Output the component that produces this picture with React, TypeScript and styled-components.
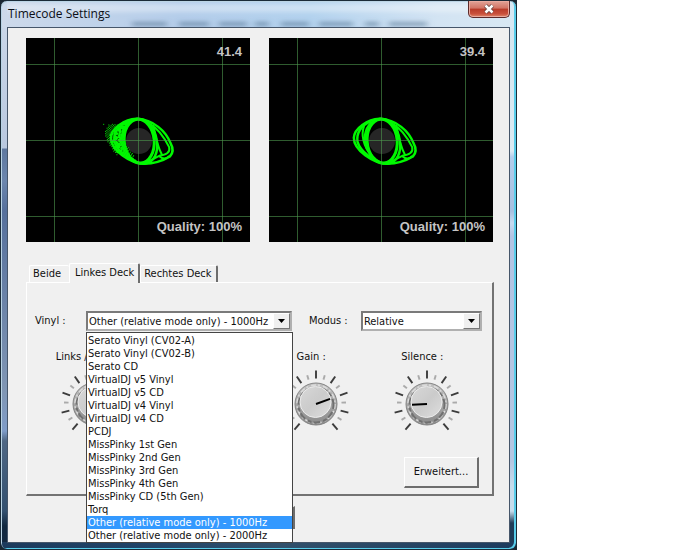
import React, { useId, useState } from "react";
import styled, { createGlobalStyle, css } from "styled-components";

const GlobalStyle = createGlobalStyle`
  * { box-sizing: border-box; }
  body {
    margin: 0;
    background: #fff;
    color: #111;
    font: 11px/14px "DejaVu Sans Condensed", "Noto Sans", sans-serif;
  }
  button, select { font: inherit; color: inherit; }
`;

const Shell = styled.div`
  max-width: 517px;
  background: #1a2630;
`;

const Frame = styled.section`
  padding: 0 6px 6px;
  border: 1px solid #1b2b38;
  border-radius: 7px;
  box-shadow: inset -2px -1px 0 #58cdea, inset 1px 1px 0 #b9d3e4;
  background:
    linear-gradient(90deg, #cdd9ea, #b4cdea 35%, #b3d2ee 60%, #d3e4f3 85%, #d8e8f3) 0 0 / 100% 27px no-repeat,
    linear-gradient(90deg, #1c3a5c, #21456a 30%, #31506b 55%, #1d3b5e) 0 100% / 100% 7px no-repeat,
    linear-gradient(180deg, #cdd9ea, #b9c8df 147px, #5f789f 148px, #6c86ad 180px, #56709c 210px, #8096b4 390px, #7f9cc8 430px, #4f6784 440px, #33506f 510px, #122840 525px) 0 0 / 7px 100% no-repeat,
    linear-gradient(180deg, #d3e4ee, #dceaf3 150px, #b4cdec 156px, #a7bfe0 210px, #c6daf0 222px, #b3c4e4 235px, #b5c6e2 460px, #c6dcec 485px, #c6dcec 510px, #1f3c58 522px) 100% 0 / 7px 100% no-repeat;
`;

const TitleBar = styled.header`
  position: relative;
  display: flex;
  justify-content: space-between;
  align-items: flex-start;
  height: 26px;
`;

const Smudges = styled.svg`
  position: absolute;
  inset: 0;
  width: 100%;
  height: 100%;
`;

const Title = styled.h1`
  position: relative;
  margin: 0;
  padding: 4px 0 0 1px;
  font: 12px/18px "Open Sans", "Noto Sans", sans-serif;
  color: #0b0f16;
`;

const CloseButton = styled.button`
  position: relative;
  display: flex;
  justify-content: center;
  align-items: center;
  width: 42px;
  height: 17px;
  padding: 0;
  border: 1px solid #5c2a2a;
  border-top: 0;
  border-radius: 0 0 5px 5px;
  box-shadow: inset 0 0 0 1px #e9aa9f;
  background: linear-gradient(180deg, #e2a398, #d27465 45%, #b83b29 50%, #c9503c 80%, #e08a6c);
`;

const Client = styled.main`
  padding: 10px 15px 13px 18px;
  border: 1px solid #46566a;
  background: #f0f0f0;
`;

const Scopes = styled.div`
  display: grid;
  grid-template-columns: 1fr 1fr;
  gap: 19px;
  margin-right: 1px;
`;

const ScopeBox = styled.figure`
  position: relative;
  display: flex;
  flex-direction: column;
  justify-content: space-between;
  align-items: flex-end;
  height: 204px;
  margin: 0;
  padding: 6px 8px 7px;
  background: #000;
  color: #c4c4c4;
  font: bold 13px/16px "Liberation Sans", sans-serif;
`;

const ScopeDrawing = styled.svg`
  position: absolute;
  inset: 0;
  width: 100%;
  height: 100%;
`;

const ScopeText = styled.span`
  position: relative;
`;

const TabList = styled.div`
  display: flex;
  align-items: flex-end;
  height: 20px;
  margin-top: 20px;
  padding-left: 3px;
`;

const Tab = styled.button<{ $active?: boolean; $edge?: boolean }>`
  height: 17px;
  padding: 0 4px 0 3px;
  border: 1px solid #fff;
  border-bottom: 0;
  border-right: ${p => (p.$edge ? "2px solid #6d6d6d" : "0")};
  border-radius: 2px 2px 0 0;
  background: #f0f0f0;
  white-space: nowrap;
  line-height: 16px;
  ${p => !p.$edge && css`
    padding-right: 8px;
  `}
  ${p => p.$active && css`
    position: relative;
    height: 20px;
    margin-bottom: -1px;
    padding: 0 4px 2px 5px;
  `}
`;

const Panel = styled.div`
  padding: 28px 0 6px;
  border: 1px solid #fff;
  border-right: 2px solid #737373;
  border-bottom: 2px solid #737373;
`;

const Choices = styled.div`
  display: grid;
  grid-template-columns: 51px minmax(0, 17fr) 69px minmax(0, 10fr);
  align-items: center;
  margin: 0 10px 0 8px;
`;

const FieldLabel = styled.label<{ $inset?: boolean }>`
  padding-left: ${p => (p.$inset ? "17px" : "0")};
  white-space: nowrap;
`;

const Combo = styled.div`
  position: relative;
  display: flex;
  height: 20px;
  border: 2px solid #7a7a7a;
  border-right-color: #b0b0b0;
  border-bottom-color: #b0b0b0;
  background: #fff;
`;

const NativeSelect = styled.select`
  flex: 1;
  min-width: 0;
  padding: 1px 17px 0 1px;
  border: 0;
  outline: 0;
  appearance: none;
  background: transparent;
  text-overflow: ellipsis;
`;

const ArrowBox = styled.span`
  position: absolute;
  right: 0;
  top: 0;
  display: flex;
  justify-content: center;
  align-items: center;
  width: 17px;
  height: 16px;
  border: 1px solid #fff;
  border-right-color: #777;
  border-bottom-color: #777;
  background: #f0f0f0;
  pointer-events: none;
`;

const Options = styled.ul`
  position: absolute;
  z-index: 2;
  top: 19px;
  left: -2px;
  right: -3px;
  margin: 0;
  padding: 1px 0 0;
  border: 1px solid #444;
  background: #fff;
  list-style: none;
`;

const Option = styled.li<{ $selected: boolean }>`
  padding-left: 1px;
  line-height: 13px;
  white-space: nowrap;
  cursor: default;
  background: ${p => (p.$selected ? "#3399ff" : "transparent")};
  color: ${p => (p.$selected ? "#fff" : "inherit")};
`;

const Knobs = styled.div`
  display: grid;
  grid-template-columns: repeat(4, 1fr);
  margin: 19px 9px 0 11px;
`;

const KnobCell = styled.div`
  display: flex;
  flex-direction: column;
  align-items: center;
  gap: 5px;
`;

const KnobLabel = styled.span<{ $wide?: boolean }>`
  min-width: ${p => (p.$wide ? "76px" : "0")};
  min-height: 14px;
  padding-right: 10px;
  white-space: nowrap;
`;

const KnobDial = styled.svg`
  width: 70px;
  height: 70px;
`;

const Actions = styled.div<{ $center?: boolean }>`
  display: flex;
  justify-content: ${p => (p.$center ? "center" : "flex-end")};
  margin: ${p => (p.$center ? "10px 0 0" : "18px 13px 0 0")};
`;

const PushButton = styled.button<{ $small?: boolean }>`
  width: ${p => (p.$small ? "70px" : "75px")};
  height: ${p => (p.$small ? "23px" : "31px")};
  padding: 0;
  border: 1px solid #fff;
  border-right: 2px solid #6d6d6d;
  border-bottom: 2px solid #6d6d6d;
  background: #f0f0f0;
`;

const vinyls = [
  "Serato Vinyl (CV02-A)",
  "Serato Vinyl (CV02-B)",
  "Serato CD",
  "VirtualDJ v5 Vinyl",
  "VirtualDJ v5 CD",
  "VirtualDJ v4 Vinyl",
  "VirtualDJ v4 CD",
  "PCDJ",
  "MissPinky 1st Gen",
  "MissPinky 2nd Gen",
  "MissPinky 3rd Gen",
  "MissPinky 4th Gen",
  "MissPinky CD (5th Gen)",
  "Torq",
  "Other (relative mode only) - 1000Hz",
  "Other (relative mode only) - 2000Hz",
];

// Stray samples scattered around the left edge of a noisy signal.
const noise = Array.from({ length: 150 }, (_, i) => {
  const a = ((i * 37) % 101) / 101;
  const b = ((i * 61) % 97) / 97;
  return { x: -106 + b * 52 + a * a * 44, y: -50 + a * 98 };
});

function Scope({ level, noisy = false }: { level: string; noisy?: boolean }) {
  return (
    <ScopeBox>
      <ScopeDrawing viewBox="0 0 224 204" preserveAspectRatio="xMidYMid slice" aria-hidden="true">
        <circle cx="113" cy="103" r="13" fill="#262626" />
        <g fill="none" stroke="#00f800" strokeWidth="7.5" transform="translate(112.5 102.5) scale(.3333)">
          <ellipse cx="2" cy="2" rx="45" ry="66" transform="rotate(-5 2 2)" strokeWidth="9" />
          <path d="M-6-65C-42-64-82-36-83-8C-83 30-25 68 16 70C50 69 78 58 94 48C104 38 106 26 96 8C82-28 46-62-6-65Z" />
          <path d="M-2-65C-32-62-50-36-50-4C-49 34-12 72 18 70C48 66 60 34 55 2C50-38 24-66-2-65Z" />
          <path d="M-30-58C-62-46-76-22-72 4C-64 32-28 58 2 68" />
          <path d="M-52-44C-62-20-56 16-28 48M34-50C62-34 78-8 92 20C96 36 84 42 62 46L24 66M44-48C50-14 56 16 70 42M60 46C74 58 84 56 92 46" strokeWidth="6" />
          {noisy && (
            <path
              d="M-8-62C-50-56-72-30-66 4C-58 30-34 50-10 60M-20-58C-56-44-62-18-56 16L-24 54M-30-52C-50-24-48 18-26 48M-86-14L-60-38M-80 6L-56-16M-74 26L-54 4M-66 36L-44 18"
              strokeDasharray="13 3 9 2"
            />
          )}
        </g>
        {noisy && (
          <g fill="#00e800" transform="translate(112.5 102.5) scale(.3333)">
            {noise.map((n, i) => <rect key={i} x={n.x} y={n.y} width="3" height="3" />)}
          </g>
        )}
        <g stroke="#4f9a4f" strokeOpacity=".6">
          <path d="M28.5 0V204M112.5 0V204M196.5 0V204M0 26.5H224M0 102.5H224M0 178.5H224" />
        </g>
      </ScopeDrawing>
      <ScopeText>{level}</ScopeText>
      <ScopeText>Quality: 100%</ScopeText>
    </ScopeBox>
  );
}

function Arrow() {
  return (
    <ArrowBox aria-hidden="true">
      <svg width="7" height="4" viewBox="0 0 7 4"><path d="M0 0H7L3.5 4Z" /></svg>
    </ArrowBox>
  );
}

function Knob({ label, angle, wide }: { label: string; angle: number; wide?: boolean }) {
  const id = useId();
  const majors = [-140, -105, -70, -35, 0, 35, 70, 105, 140];
  const minors = [-122, -87, -52, -17, 17, 52, 87, 122];
  return (
    <KnobCell>
      <KnobLabel $wide={wide}>{label}</KnobLabel>
      <KnobDial viewBox="-35 -35 70 70" role="img" aria-label={label}>
        <defs>
          <linearGradient id={id + "rim"} x1="0" y1="0" x2="0" y2="1">
            <stop offset="0" stopColor="#c2c2c2" />
            <stop offset="1" stopColor="#8a8a8a" />
          </linearGradient>
          <linearGradient id={id + "cap"} x1="0" y1="0" x2="1" y2="1">
            <stop offset="0" stopColor="#d8d8d8" />
            <stop offset=".5" stopColor="#cbcbcb" />
            <stop offset="1" stopColor="#dedede" />
          </linearGradient>
        </defs>
        {majors.map(a => <path key={a} d="M0-25.5V-33.5" transform={`rotate(${a})`} stroke="#3c3c3c" strokeWidth="1.9" />)}
        {minors.map(a => <path key={a} d="M0-25.5V-30" transform={`rotate(${a})`} stroke="#aaa" strokeWidth="1.9" />)}
        <circle r="21" fill={`url(#${id}rim)`} stroke="#858585" />
        <circle r="19" fill="none" stroke="#dcdcdc" strokeWidth="1.5" strokeDasharray="5 2 2 3" />
        <circle cy="1" r="17.5" fill="none" stroke="#707070" strokeWidth="2" strokeDasharray="4 3 7 2" />
        <circle cx="-.5" cy="-2" r="15.5" fill={`url(#${id}cap)`} stroke="#ececec" />
        <path d="M0 0V-15" transform={`rotate(${angle})`} stroke="#000" strokeWidth="2" />
      </KnobDial>
    </KnobCell>
  );
}

export default function App() {
  const [vinyl, setVinyl] = useState(vinyls[14]);
  return (
    <Shell>
      <GlobalStyle />
      <Frame>
        <TitleBar>
          <Smudges aria-hidden="true">
            <defs>
              <filter id="soft" filterUnits="userSpaceOnUse" x="0" y="0" width="502" height="26">
                <feGaussianBlur stdDeviation="3 2" />
              </filter>
            </defs>
            <g filter="url(#soft)" stroke="#53708f" strokeOpacity=".6" strokeWidth="4" fill="none">
              <path d="M125 23H160M172 23H202M212 23H240M248 23H262M274 23H302M312 23H346M358 23H372M382 23H420" />
            </g>
            <path d="M0 7H502" stroke="#fff" strokeOpacity=".35" strokeWidth="8" filter="url(#soft)" />
          </Smudges>
          <Title>Timecode Settings</Title>
          <CloseButton type="button" aria-label="Close">
            <svg width="12" height="10" viewBox="0 0 12 10" aria-hidden="true">
              <path d="M2.5 1.5L9.5 8.5M9.5 1.5L2.5 8.5" stroke="#64423f" strokeWidth="4" />
              <path d="M2.5 1.5L9.5 8.5M9.5 1.5L2.5 8.5" stroke="#fff" strokeWidth="2.5" />
            </svg>
          </CloseButton>
        </TitleBar>
        <Client>
          <Scopes>
            <Scope level="41.4" noisy />
            <Scope level="39.4" />
          </Scopes>
          <TabList role="tablist">
            <Tab type="button" role="tab" aria-selected={false}>Beide</Tab>
            <Tab type="button" role="tab" aria-selected $active $edge>Linkes Deck</Tab>
            <Tab type="button" role="tab" aria-selected={false} $edge>Rechtes Deck</Tab>
          </TabList>
          <Panel role="tabpanel">
            <Choices>
              <FieldLabel htmlFor="vinyl">Vinyl :</FieldLabel>
              <Combo>
                <NativeSelect id="vinyl" value={vinyl} onChange={e => setVinyl(e.target.value)}>
                  {vinyls.map(v => <option key={v}>{v}</option>)}
                </NativeSelect>
                <Arrow />
                <Options role="listbox" aria-label="Vinyl">
                  {vinyls.map(v => (
                    <Option key={v} role="option" aria-selected={v === vinyl} $selected={v === vinyl} onClick={() => setVinyl(v)}>
                      {v}
                    </Option>
                  ))}
                </Options>
              </Combo>
              <FieldLabel htmlFor="mode" $inset>Modus :</FieldLabel>
              <Combo>
                <NativeSelect id="mode" defaultValue="Relative">
                  <option>Relative</option>
                </NativeSelect>
                <Arrow />
              </Combo>
            </Choices>
            <Knobs>
              <Knob label="Links /" angle={0} wide />
              <Knob label="" angle={0} />
              <Knob label="Gain :" angle={70} />
              <Knob label="Silence :" angle={-93} />
            </Knobs>
            <Actions>
              <PushButton type="button">Erweitert...</PushButton>
            </Actions>
          </Panel>
          <Actions $center>
            <PushButton type="button" $small aria-label="OK" />
          </Actions>
        </Client>
      </Frame>
    </Shell>
  );
}
